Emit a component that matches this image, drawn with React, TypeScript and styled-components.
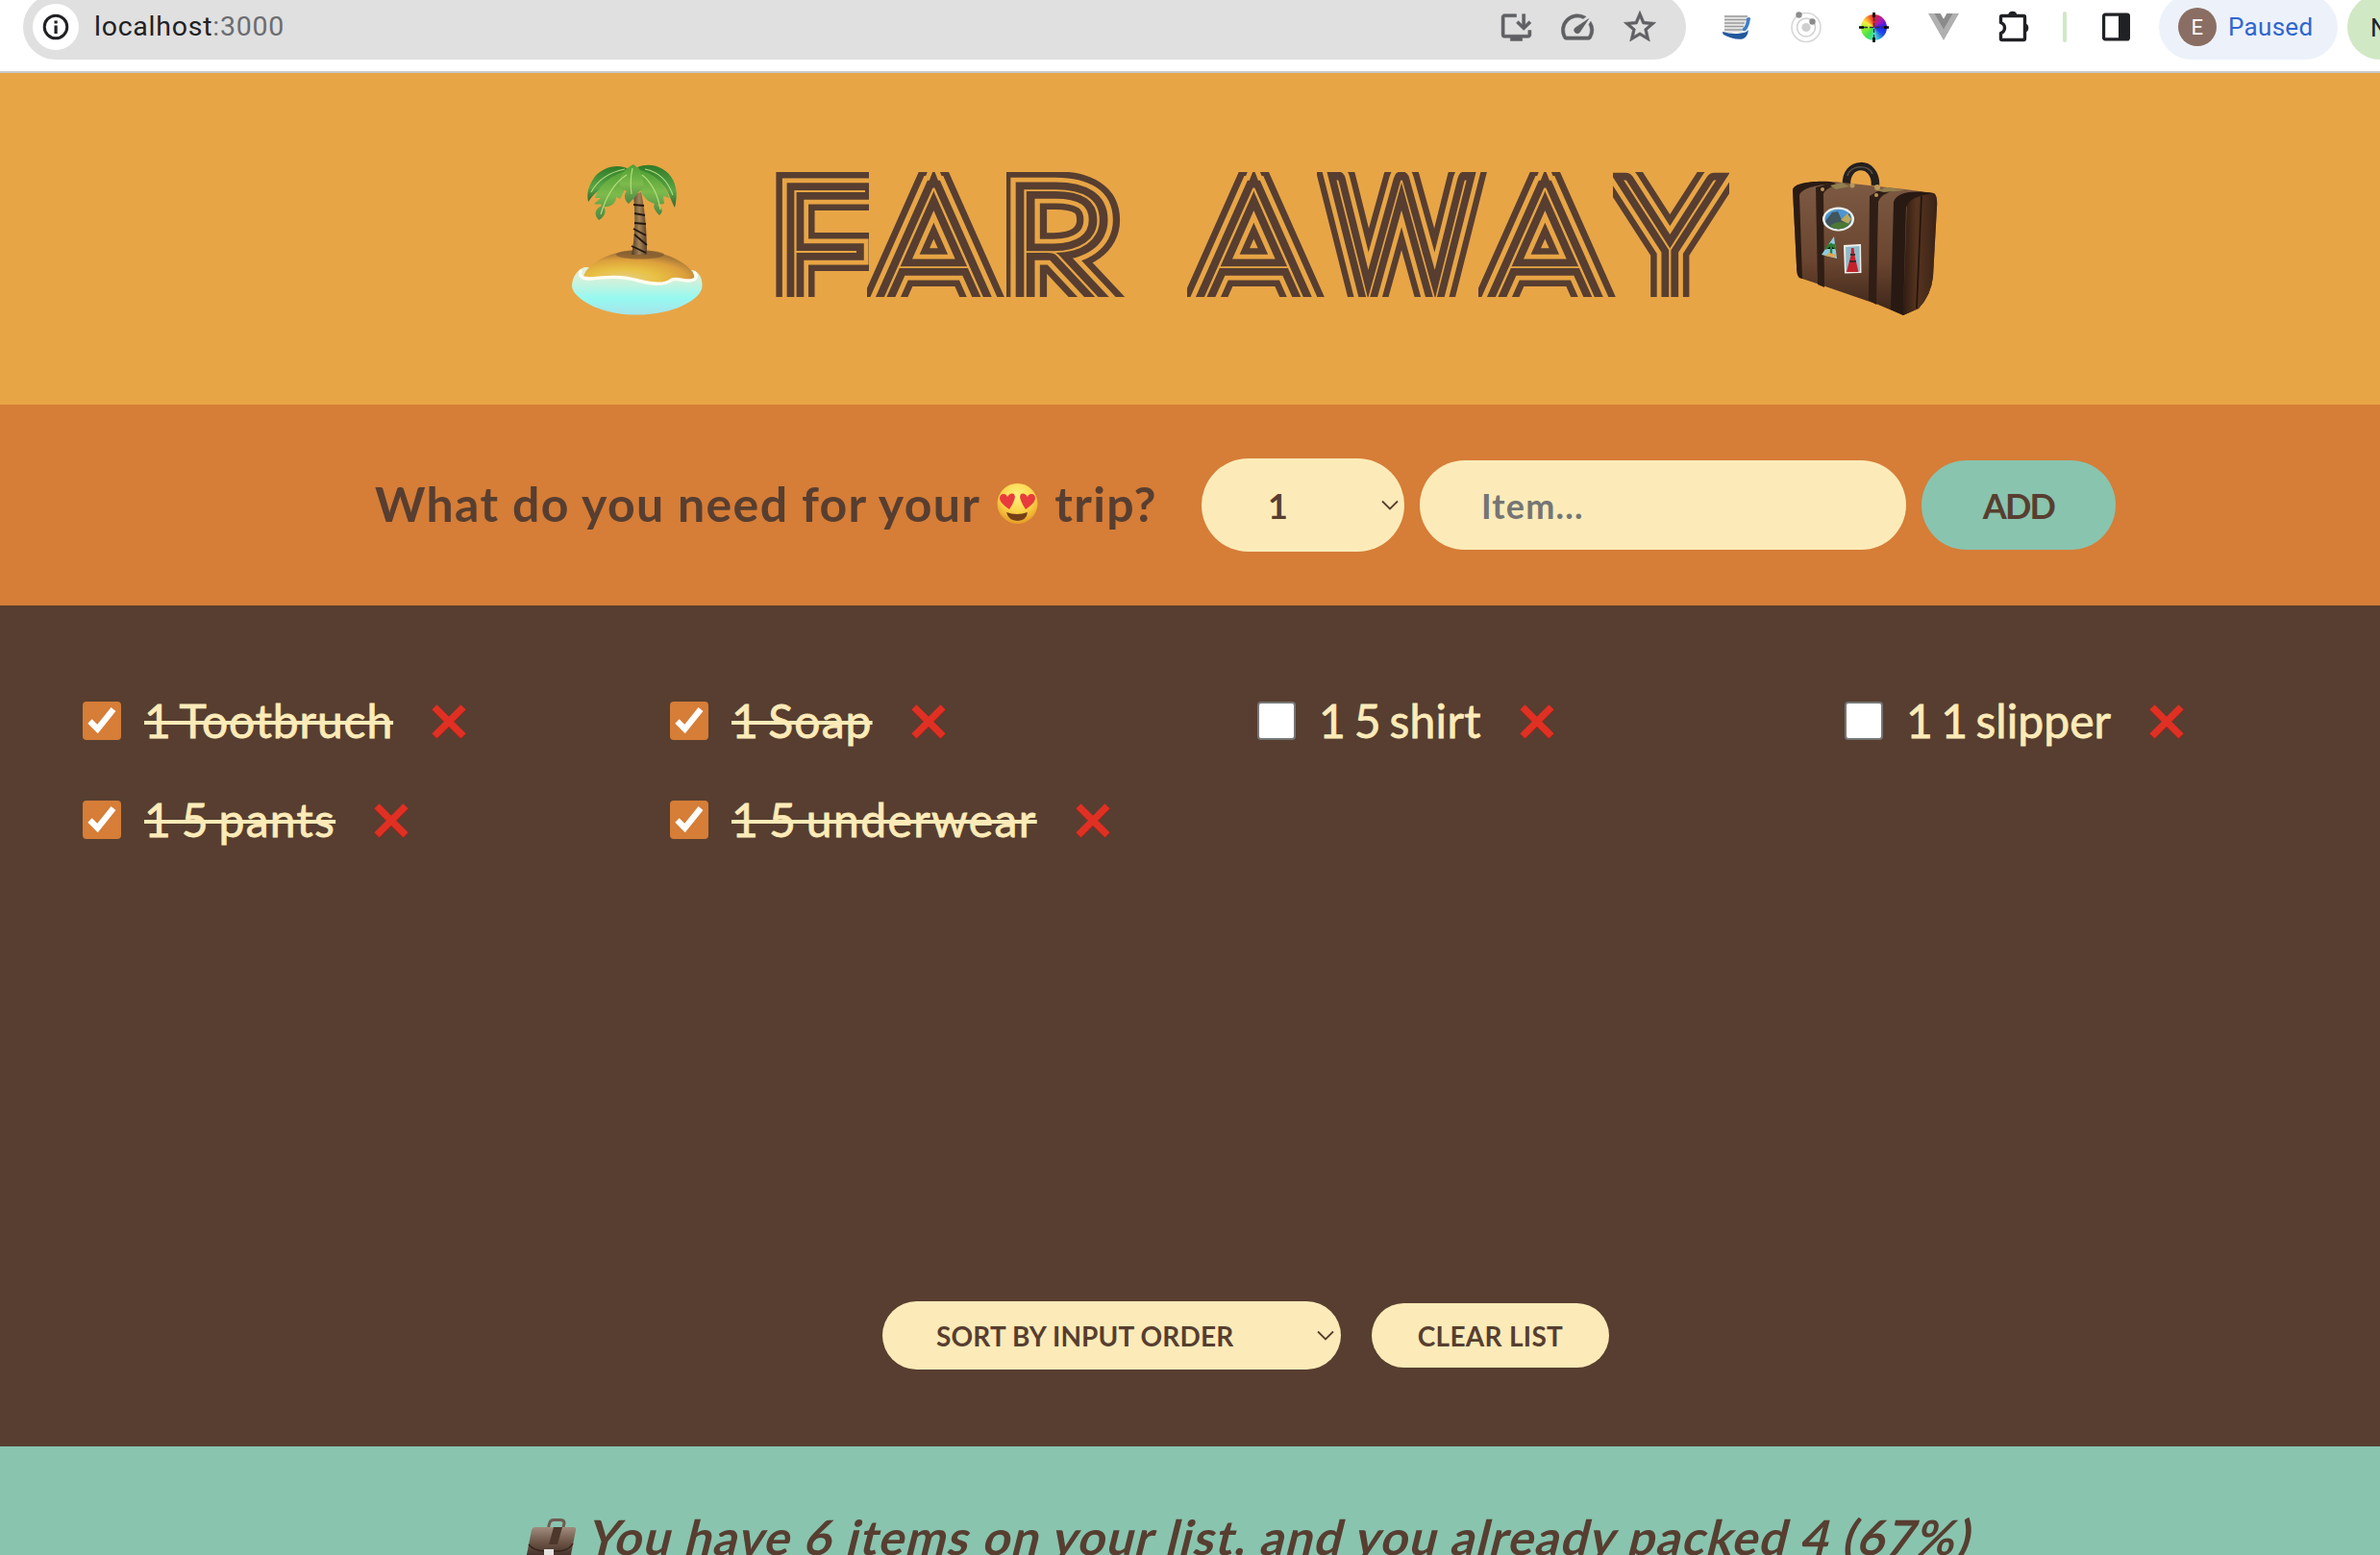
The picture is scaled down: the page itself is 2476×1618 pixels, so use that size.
import React, { useState } from "react";
import styled, { createGlobalStyle, css } from "styled-components";
import { MdOutlineInstallDesktop, MdSpeed, MdStarOutline } from "react-icons/md";

const c = {
  sand: "#e8a545",
  orange: "#d67d37",
  brown: "#573e30",
  teal: "#89c4af",
  cream: "#fcebb8",
};

const GlobalStyle = createGlobalStyle`
  * { box-sizing: border-box; margin: 0; padding: 0; }
  body { margin: 0; overflow: hidden; background: ${c.teal}; font-family: Lato, "Open Sans", sans-serif; color: ${c.brown}; }
  svg { display: block; flex: none; }
  button, input { border: none; font-family: inherit; }
`;

const Window = styled.div`
  width: 2476px;
  height: 1618px;
  overflow: hidden;
`;

/* ---------- browser toolbar ---------- */
const Toolbar = styled.div`
  height: 76px;
  background: #fff;
  border-bottom: 2px solid #c9c9c7;
  display: flex;
  align-items: flex-start;
  padding-left: 24px;
  font-family: Roboto, sans-serif;
`;
const Omnibox = styled.div`
  width: 1730px;
  height: 68px;
  margin-top: -6px;
  border-radius: 34px;
  background: #e0e0e0;
  display: flex;
  align-items: center;
  padding: 0 28px 0 10px;
  flex: none;
`;
const SiteInfo = styled.span`
  width: 48px;
  height: 48px;
  border-radius: 50%;
  background: #fff;
  display: grid;
  place-items: center;
`;
const Url = styled.span`
  margin: 0 auto 0 16px;
  font-size: 28.5px;
  line-height: 40px;
  letter-spacing: 0.75px;
  color: #202124;
`;
const Port = styled.span`
  color: #6b6d70;
`;
const OmniActions = styled.div`
  display: flex;
  align-items: center;
  gap: 25px;
  color: #5f6063;
  path:not([fill="none"]) { stroke: currentColor; stroke-width: 0.35px; }
`;
const Extensions = styled.div`
  display: flex;
  align-items: center;
  height: 56px;
  margin-left: 38px;
  flex: none;
`;
const Slot = styled.span<{ $gap: number }>`
  margin-right: ${(p) => p.$gap}px;
`;
const Separator = styled.span`
  width: 4px;
  height: 32px;
  border-radius: 2px;
  background: #d1e8c4;
  margin-right: 37px;
`;
const Profile = styled.div`
  width: 186px;
  height: 68px;
  margin: -6px 10px 0 30px;
  border-radius: 34px;
  background: #edf2fa;
  display: flex;
  align-items: center;
  padding-left: 20px;
  flex: none;
  color: #2f66d0;
  font-size: 26px;
  letter-spacing: 0.3px;
`;
const Avatar = styled.span`
  width: 40px;
  height: 40px;
  border-radius: 50%;
  background: #8a6e63;
  color: #fff;
  font-size: 22px;
  display: grid;
  place-items: center;
  margin-right: 12px;
`;
const UpdatePill = styled.div`
  width: 260px;
  height: 68px;
  margin-top: -6px;
  border-radius: 34px;
  background: #d1e8c4;
  padding-left: 24px;
  line-height: 70px;
  font-size: 26px;
  color: #202124;
  flex: none;
`;

/* ---------- app ---------- */
const Page = styled.main`
  width: 2592px;
  display: grid;
  grid-template-rows: 345px 209px 875px 200px;
`;
const Header = styled.header`
  background: ${c.sand};
  display: flex;
  align-items: flex-start;
  padding: 92px 0 0 592px;
`;
const Title = styled.h1`
  display: flex;
  gap: 64px;
  margin: 11px 63px 0 73px;
  font-weight: 100;
`;
const Word = styled.span`
  display: flex;
`;
type LetterProps = { $w: number; $ml?: number; $dx?: number; $dy?: number; $sx?: number; $k?: number };
const LetterBox = styled.span<LetterProps>`
  width: ${(p) => p.$w}px;
  height: 130px;
  margin-left: ${(p) => p.$ml ?? 0}px;
  clip-path: inset(0);
  flex: none;
`;
const ring = (width: number, color: string) => css<LetterProps>`
  -webkit-text-stroke: ${(p: LetterProps) => width * (p.$k ?? 1)}px ${color};
`;
const Glyph = styled.span<LetterProps>`
  display: block;
  width: max-content;
  position: relative;
  font: 100 180px/130px Lato, sans-serif;
  color: ${c.sand};
  paint-order: stroke fill;
  transform-origin: 0 0;
  transform: translate(${(p) => p.$dx ?? 0}px, ${(p) => p.$dy ?? 0}px) scaleX(${(p) => p.$sx ?? 1});
  ${ring(38, c.brown)}
  &::before, &::after {
    content: attr(data-char);
    position: absolute;
    left: 0;
    top: 0;
  }
  &::before { ${ring(25, c.sand)} }
  &::after { ${ring(15.5, c.brown)} }
`;
const Letter = ({ ch, ...p }: LetterProps & { ch: string }) => (
  <LetterBox {...p}>
    <Glyph {...p} data-char={ch}>{ch}</Glyph>
  </LetterBox>
);

const AddForm = styled.form`
  background: ${c.orange};
  display: flex;
  align-items: center;
  gap: 16px;
  padding-left: 390px;
`;
const Question = styled.h3`
  width: 812px;
  margin: -4px 32px 0 0;
  font-size: 50px;
  line-height: 60px;
  letter-spacing: 1.35px;
  display: flex;
  align-items: center;
  gap: 17px;
  white-space: nowrap;
  flex: none;
`;
const Picker = styled.button<{ $small?: boolean }>`
  width: ${(p) => (p.$small ? 477 : 211)}px;
  height: ${(p) => (p.$small ? 71 : 97)}px;
  padding: 0 ${(p) => (p.$small ? "7px 0 56px" : "6px 0 69px")};
  border-radius: 50px;
  background: ${c.cream};
  color: ${c.brown};
  font-weight: 700;
  font-size: ${(p) => (p.$small ? 28 : 36)}px;
  letter-spacing: 0.15px;
  display: flex;
  align-items: center;
  justify-content: space-between;
  flex: none;
`;
const ItemInput = styled.input`
  width: 506px;
  height: 93px;
  padding: 0 64px;
  border-radius: 50px;
  background: ${c.cream};
  color: ${c.brown};
  font-weight: 700;
  font-size: 36px;
  flex: none;
  &::placeholder { color: #757575; letter-spacing: 1.2px; }
`;
const Pill = styled.button<{ $small?: boolean }>`
  width: ${(p) => (p.$small ? 247 : 202)}px;
  height: ${(p) => (p.$small ? 67 : 93)}px;
  border-radius: 50px;
  background: ${(p) => (p.$small ? c.cream : c.teal)};
  color: ${c.brown};
  font-weight: 700;
  font-size: ${(p) => (p.$small ? 28 : 36)}px;
  letter-spacing: ${(p) => (p.$small ? 0.3 : -1.8)}px;
  flex: none;
`;

const ListPanel = styled.section`
  background: ${c.brown};
  display: flex;
  flex-direction: column;
  justify-content: space-between;
  align-items: center;
  padding: 90px 0 80px;
`;
const Items = styled.ul`
  list-style: none;
  width: 100%;
  padding-left: 86px;
  display: grid;
  grid-template-columns: repeat(4, 611px);
  grid-auto-rows: 60px;
  row-gap: 43px;
`;
const Row = styled.li`
  display: flex;
  align-items: center;
  color: ${c.cream};
  font-size: 48px;
  white-space: nowrap;
`;
const Check = styled.button<{ $on: boolean }>`
  width: 40px;
  height: 40px;
  border-radius: 4px;
  display: grid;
  place-items: center;
  background: ${(p) => (p.$on ? c.orange : "#fff")};
  border: ${(p) => (p.$on ? "none" : "2px solid #767676")};
  margin-right: 24px;
  flex: none;
`;
const Label = styled.span<{ $done: boolean; $ls: number }>`
  line-height: 60px;
  font-weight: 400;
  letter-spacing: ${(p) => p.$ls}px;
  word-spacing: -4px;
  -webkit-text-stroke: 0.8px ${c.cream};
  text-decoration: ${(p) => (p.$done ? "line-through" : "none")};
  text-decoration-thickness: 4px;
`;
const Remove = styled.button`
  background: none;
  margin: 2px 0 0 40px;
`;
const Actions = styled.div`
  display: flex;
  align-items: center;
  gap: 32px;
`;
const Stats = styled.footer`
  background: ${c.teal};
  padding: 64px 0 0 546px;
  display: flex;
  align-items: flex-start;
  gap: 14px;
`;
const CaseMark = styled.span`
  margin-top: 9px;
`;
const StatsText = styled.em`
  font-size: 50px;
  font-style: normal;
  font-weight: 700;
  line-height: 60px;
  letter-spacing: 1.35px;
  white-space: nowrap;
  transform: skewX(-14deg);
`;

/* ---------- drawings ---------- */
const Info = () => (
  <svg width="28" height="28" viewBox="0 0 28 28">
    <circle cx="14" cy="14" r="11.8" fill="none" stroke="#202124" strokeWidth="3" />
    <rect x="12.5" y="12.5" width="3.2" height="8.5" fill="#202124" />
    <rect x="12.5" y="7.5" width="3.2" height="3" fill="#202124" />
  </svg>
);
const PageStack = () => (
  <svg width="30" height="28" viewBox="0 0 30 28">
    <path d="M2 2H26L20 20H2Z" fill="#e6e6e6" />
    <path d="M2 3H26M2 6.5H25M2 10H23M2 13.500H22M2 17H20" stroke="#9a9a9a" strokeWidth="1.3" />
    <path d="M25 5Q28 3 29 5Q28 14 24 18Q22 19 20 17Q25 12 25 5Z" fill="#3f7fc7" />
    <path d="M0 19Q10 22 19 20.500Q25 20 27 17Q26 25 21 26.500Q12 28 1 22Q0 21 0 19Z" fill="#22599c" />
  </svg>
);
const Orbit = () => (
  <svg width="34" height="34" viewBox="0 0 34 34">
    <circle cx="17" cy="17.500" r="15" fill="none" stroke="#d8d8d8" strokeWidth="1.600" />
    <circle cx="17" cy="17.500" r="9.500" fill="none" stroke="#d0d0d0" strokeWidth="1.600" />
    <circle cx="17" cy="17.500" r="4.600" fill="#cfcfcf" />
    <circle cx="9.500" cy="4.500" r="3.200" fill="#8c8c8c" />
    <circle cx="23.500" cy="11.500" r="3.200" fill="#8c8c8c" />
  </svg>
);
const Wheel = styled.span`
  display: block;
  width: 27px;
  height: 27px;
  border-radius: 50%;
  background: conic-gradient(#e0202a, #a01cc0 50deg, #2020f0 90deg, #1c50e8 130deg, #50e0d0 175deg, #40e050 215deg, #90f030 265deg, #f8f040 300deg, #f87028 335deg, #e0202a);
  svg { margin: -2px; transform: translate(-2px, -2px); }
  padding: 2px;
`;
const Cross = () => (
  <svg width="31" height="31" viewBox="0 0 31 31">
    <path d="M15.500 0V5M15.500 26V31M0 15.500H5M26 15.500H31" stroke="#000" strokeWidth="2.600" />
    <path d="M15.500 5V26M5 15.500H26" stroke="#333" strokeWidth="1.300" strokeDasharray="4 2" />
  </svg>
);
const Vue = () => (
  <svg width="32" height="28" viewBox="0 0 32 28">
    <path d="M0 0H12.500L16 6L19.500 0H32L16 28Z" fill="#b0b0b0" />
    <path d="M6.500 0H12.500L16 6L19.500 0H25.500L16 16.500Z" fill="#8b8b8b" />
  </svg>
);
const Puzzle = () => (
  <svg width="34" height="34" viewBox="0 0 34 34">
    <path d="M4 5.500H26Q27.500 5.500 27.500 7V29Q27.500 30.500 26 30.500H4Q2.500 30.500 2.500 29V23.500Q6.500 22 6.500 18Q6.500 14 2.500 12.500V7Q2.500 5.500 4 5.500Z" fill="none" stroke="#202124" strokeWidth="3.400" strokeLinejoin="round" />
    <path d="M10 5A4.800 5 0 0 1 19.500 5ZM28 13.300A4.800 5 0 0 1 28 22.800Z" fill="#202124" />
  </svg>
);
const SidePanel = () => (
  <svg width="29" height="30" viewBox="0 0 29 30">
    <rect x="1.600" y="2.100" width="25.800" height="25.800" rx="1.500" fill="none" stroke="#202124" strokeWidth="3.200" />
    <path d="M17 2H27V28H17Z" fill="#202124" />
  </svg>
);
const Chevron = () => (
  <svg width="18" height="12" viewBox="0 0 18 12">
    <path d="M1 1.500L9 9.500L17 1.500" fill="none" stroke={c.brown} strokeWidth="1.800" />
  </svg>
);
const Tick = () => (
  <svg width="40" height="40" viewBox="0 0 40 40">
    <path d="M7.500 20.500L15.500 28.500L32 8" fill="none" stroke="#fff" strokeWidth="6.200" />
  </svg>
);
const RedCross = () => (
  <svg width="36" height="36" viewBox="0 0 36 36">
    <path d="M3 3.500L33 33.500M33 3.500L3 33.500" stroke="#a81f16" strokeWidth="7.200" />
    <path d="M3 2.800L33 32.800M33 2.800L3 32.800" stroke="#e03023" strokeWidth="7.200" />
  </svg>
);

const Island = () => (
  <svg width="142" height="162" viewBox="0 0 142 162">
    <defs>
      <linearGradient id="sea" x1="0" y1="0" x2="0" y2="1">
        <stop offset="0" stopColor="#e6efd8" />
        <stop offset=".3" stopColor="#cdf2dc" />
        <stop offset=".65" stopColor="#96f9f0" />
        <stop offset="1" stopColor="#a6e4ea" />
      </linearGradient>
      <radialGradient id="dune" cx=".36" cy=".85" r=".75">
        <stop offset="0" stopColor="#e7cf86" />
        <stop offset=".4" stopColor="#e8c043" />
        <stop offset=".75" stopColor="#dda03c" />
        <stop offset="1" stopColor="#a87838" />
      </radialGradient>
      <linearGradient id="trunk">
        <stop offset="0" stopColor="#4f3a25" />
        <stop offset=".5" stopColor="#a38357" />
        <stop offset="1" stopColor="#5a4028" />
      </linearGradient>
      <linearGradient id="leaf" x1="0" y1="0" x2="0" y2="1">
        <stop offset="0" stopColor="#4e9f33" />
        <stop offset=".5" stopColor="#7dba4c" />
        <stop offset="1" stopColor="#4c8743" />
      </linearGradient>
      <linearGradient id="leafDark" x1="0" y1="0" x2="0" y2="1">
        <stop offset="0" stopColor="#2f7a28" />
        <stop offset=".6" stopColor="#5aa646" />
        <stop offset="1" stopColor="#2f6531" />
      </linearGradient>
    </defs>
    <path d="M16 110C8 113 3 121 3 130C4 142 31 159 66 159.500C106 161 138 144 138.500 130C139 121 135 115 129 113Z" fill="url(#sea)" />
    <path d="M15 122C15 108 43 92 72 92C105 93 131 110 131 122C124 126 115 122 108 124C99 129 91 129 76 124C53 118 36 122 15 122Z" fill="url(#dune)" />
    <ellipse cx="74" cy="97" rx="25" ry="4.500" fill="#74522e" opacity=".6" />
    <path d="M12 114C10 120 15 122 22 122C39 120 55 119 72 124C88 128 99 129 107 123C113 121 117 124 124 124C131 124 134 121 131 116" fill="none" stroke="#fffdf2" strokeWidth="3.400" strokeLinecap="round" />
    <path d="M67 34L75 32C79 50 81 72 81 97L65 97C69 76 69 55 67 34Z" fill="url(#trunk)" />
    <path d="M67 45L78 46M68 54L79 56M68 64L80 65M68 76L81 87M65 88L80 95M67 70L80 77" stroke="#23180f" strokeWidth="1.800" />
    <path d="M64 9C52 1 34 6 26 17C20 26 18 33 20 42C26 33 34 27 42 23C50 19 58 16 64 9Z" fill="url(#leafDark)" />
    <path d="M71 6C86 0 102 7 108 19C112 27 113 36 110 48C105 39 103 28 95 22C86 18 79 16 71 6Z" fill="url(#leafDark)" />
    <path d="M64 8C47 13 32 22 27 38L33 38L26 44C29 46 33 43 34 46C26 50 26 56 31 61C38 57 39 51 36 47C44 48 49 43 49 37L53 39C59 29 62 18 64 8Z" fill="url(#leaf)" />
    <path d="M71 8C89 13 100 22 104 38L98 36L99 44L92 45C98 49 98 53 94 56C89 51 87 47 89 44C81 42 76 35 73 28Z" fill="url(#leaf)" />
    <path d="M67 3C76 9 79 19 77 28L71 33L70 35C68 38 65 41 62 44C57 40 57 34 60 31C53 28 51 23 53 18C55 11 61 6 67 3Z" fill="url(#leaf)" />
    <path d="M66 7Q63 20 65 34M60 14Q42 25 33 55M76 14Q91 26 95 50M58 8Q33 13 23 32M79 8Q100 12 108 35" fill="none" stroke="#b3dd7c" strokeWidth="1.200" />
  </svg>
);

const Suitcase = () => (
  <svg width="154" height="162" viewBox="0 0 154 162">
    <defs>
      <linearGradient id="hide" x1="0" y1="0" x2="0" y2="1">
        <stop offset="0" stopColor="#7d5a43" />
        <stop offset=".6" stopColor="#6a452f" />
        <stop offset="1" stopColor="#3b2418" />
      </linearGradient>
      <linearGradient id="side" x1="0" x2="1">
        <stop offset="0" stopColor="#2f1c12" />
        <stop offset=".4" stopColor="#57341f" />
        <stop offset="1" stopColor="#3a2317" />
      </linearGradient>
    </defs>
    <path d="M59 25C57 -1 90 -2 89 25" fill="none" stroke="#24201d" strokeWidth="8.500" />
    <path d="M60 15C62 4 82 2 86 13" fill="none" stroke="#55504b" strokeWidth="1.500" />
    <path d="M3 30C4 23 14 21 46 21L120 29L150 33Q154 36 153 48L149 120Q147 139 134 153L118 160L92 149L34 129L10 121Q7 119 7 108Z" fill="url(#hide)" />
    <path d="M3 30C4 23 20 20 42 21L48 23C30 24 13 27 10 35L13 122L10 121Q7 119 7 108Z" fill="#2a1b13" />
    <path d="M27 27L44 22L49 24Q36 29 35 34L36 131L29 128Z" fill="#2f1e15" />
    <path d="M83 36L96 28L109 30Q94 34 92 42L90 149L82 144Z" fill="#2f1e15" />
    <path d="M122 39C127 33 140 32 150 33Q154 36 153 48L149 120Q147 139 134 153L118 160Z" fill="url(#side)" />
    <path d="M108 42C112 31 130 30 149 33C132 36 124 39 121 48L118 160L105 154Z" fill="#281912" />
    <path d="M137 36L132 153" stroke="#24160f" strokeWidth="1.800" />
    <path d="M42 25L54 22L62 26L48 29ZM89 30L101 27L120 30L98 32Z" fill="#92804f" />
    <circle cx="65" cy="25" r="2.500" fill="#ba985c" />
    <circle cx="91" cy="27" r="3" fill="#ba985c" />
    <circle cx="34" cy="29" r="2" fill="#ba985c" />
    <circle cx="90" cy="35" r="2" fill="#ba985c" />
    <ellipse cx="50.500" cy="60" rx="16.500" ry="12.500" fill="#eef0ea" />
    <ellipse cx="50.500" cy="60" rx="14" ry="10.300" fill="#4e94d0" />
    <path d="M37 62L44 53L50 52L54 61L62 54L64 60Q63 69 51 70.500Q40 70 37 62Z" fill="#40555d" />
    <path d="M53 61L60 54L64 60L61 65Z" fill="#bba95c" />
    <path d="M42 67Q50 60 62 65Q58 70 50 70.500Q45 70 42 67Z" fill="#4c7836" />
    <path d="M46 78L33 97L49 101Z" fill="#8fcde0" />
    <path d="M43 86V98M37 91L43 86L48 91M39 87L47 87" stroke="#2f7b38" strokeWidth="2.400" />
    <path d="M37 98L47 100L48 97L41 95Z" fill="#dfa955" />
    <path d="M56 87L74 86L74.500 116L57 116.500Z" fill="#f1eee8" />
    <path d="M58 89L72.500 88L73 114.500L58.500 115Z" fill="#8fb9ca" />
    <path d="M64 90H66.500L67.500 98L71.500 115H59L63.500 98Z" fill="#c3232a" />
    <path d="M63 97H68M62 104H69" stroke="#47272b" strokeWidth="1.800" />
  </svg>
);

const HeartEyes = () => (
  <svg width="43" height="44" viewBox="0 0 43 44">
    <defs>
      <radialGradient id="face" cx=".5" cy=".3" r=".7">
        <stop offset="0" stopColor="#fff27e" />
        <stop offset=".6" stopColor="#fbd247" />
        <stop offset="1" stopColor="#e79b28" />
      </radialGradient>
    </defs>
    <circle cx="21.500" cy="22" r="21" fill="url(#face)" />
    <path d="M10 31Q21 35 32 31Q31 39.500 21.500 40Q12 39.500 10 31Z" fill="#744018" />
    <path d="M13 28Q4 22 3 17Q3 12 7 12Q10 12 11 15Q14 10 18 12Q21 16 13 28Z" fill="#e83b3d" />
    <path d="M30 28Q39 22 40 17Q40 12 36 12Q33 12 32 15Q29 10 25 12Q22 16 30 28Z" fill="#e83b3d" />
  </svg>
);

const Briefcase = () => (
  <svg width="54" height="50" viewBox="0 0 54 50">
    <defs>
      <linearGradient id="case" x1="0" y1="0" x2="0" y2="1">
        <stop offset="0" stopColor="#a08c7c" />
        <stop offset=".4" stopColor="#6d5547" />
        <stop offset="1" stopColor="#2a1813" />
      </linearGradient>
    </defs>
    <path d="M24.500 11L26 6Q27 3.500 30 3.500H37Q41 3.500 41 7L40 11" fill="none" stroke="#6e5c51" strokeWidth="3" />
    <path d="M11 11H51Q53.500 11 53 14L46 50H0L7 14Q8 11 11 11Z" fill="url(#case)" />
    <path d="M4 29Q8 35 20 36H36Q46 35 50 28" fill="none" stroke="#37231b" strokeWidth="1.500" />
    <path d="M30 11H39L34 29H25Z" fill="#4d372c" />
    <rect x="20" y="34" width="10" height="14" fill="#e6e2e0" />
  </svg>
);

type Item = { label: string; packed: boolean; ls: number };
const initialItems: Item[] = [
  { label: "1 Tootbruch", packed: true, ls: 0.9 },
  { label: "1 Soap", packed: true, ls: 1.1 },
  { label: "1 5 shirt", packed: false, ls: 0.3 },
  { label: "1 1 slipper", packed: false, ls: 0.05 },
  { label: "1 5 pants", packed: true, ls: 1.3 },
  { label: "1 5 underwear", packed: true, ls: 1.4 },
];

export default function App() {
  const [items, setItems] = useState(initialItems);
  const toggle = (i: number) =>
    setItems((all) => all.map((it, n) => (n === i ? { ...it, packed: !it.packed } : it)));
  const packed = items.filter((it) => it.packed).length;
  const percent = items.length ? Math.round((packed / items.length) * 100) : 0;

  return (
    <Window>
      <GlobalStyle />
      <Toolbar>
        <Omnibox>
          <SiteInfo><Info /></SiteInfo>
          <Url>localhost<Port>:3000</Port></Url>
          <OmniActions>
            <MdOutlineInstallDesktop size={37} />
            <MdSpeed size={40} />
            <MdStarOutline size={40} />
          </OmniActions>
        </Omnibox>
        <Extensions>
          <Slot $gap={40}><PageStack /></Slot>
          <Slot $gap={40}><Orbit /></Slot>
          <Slot $gap={43}><Wheel><Cross /></Wheel></Slot>
          <Slot $gap={41}><Vue /></Slot>
          <Slot $gap={33}><Puzzle /></Slot>
          <Separator />
          <SidePanel />
        </Extensions>
        <Profile><Avatar>E</Avatar>Paused</Profile>
        <UpdatePill>N</UpdatePill>
      </Toolbar>
      <Page>
        <Header>
          <Island />
          <Title>
            <Word>
              <Letter ch="F" $w={97} $dx={-1.5} $dy={10} />
              <Letter ch="A" $w={146} $ml={-2} $dx={8} $dy={8} $sx={1.07} />
              <Letter ch="R" $w={126} $ml={-1} $dx={-5} $dy={10} $sx={1.12} />
            </Word>
            <Word>
              <Letter ch="A" $w={146} $ml={-2} $dx={8} $dy={8} $sx={1.07} />
              <Letter ch="W" $w={179} $ml={-11} $dx={16} $sx={0.8} $k={1.2} />
              <Letter ch="A" $w={146} $ml={-11} $dx={8} $dy={8} $sx={1.07} />
              <Letter ch="Y" $w={121} $ml={-6} $dx={8} />
            </Word>
          </Title>
          <Suitcase />
        </Header>
        <AddForm onSubmit={(e) => e.preventDefault()}>
          <Question>
            <span>What do you need for your</span>
            <HeartEyes />
            <span>trip?</span>
          </Question>
          <Picker type="button">1<Chevron /></Picker>
          <ItemInput placeholder="Item..." />
          <Pill>ADD</Pill>
        </AddForm>
        <ListPanel>
          <Items>
            {items.map((it, i) => (
              <Row key={it.label}>
                <Check $on={it.packed} role="checkbox" aria-checked={it.packed} onClick={() => toggle(i)}>
                  {it.packed && <Tick />}
                </Check>
                <Label $done={it.packed} $ls={it.ls}>{it.label}</Label>
                <Remove onClick={() => setItems((all) => all.filter((_, n) => n !== i))}><RedCross /></Remove>
              </Row>
            ))}
          </Items>
          <Actions>
            <Picker type="button" $small>SORT BY INPUT ORDER<Chevron /></Picker>
            <Pill $small onClick={() => setItems([])}>CLEAR LIST</Pill>
          </Actions>
        </ListPanel>
        <Stats>
          <CaseMark><Briefcase /></CaseMark>
          <StatsText>
            You have {items.length} items on your list, and you already packed {packed} ({percent}%)
          </StatsText>
        </Stats>
      </Page>
    </Window>
  );
}
